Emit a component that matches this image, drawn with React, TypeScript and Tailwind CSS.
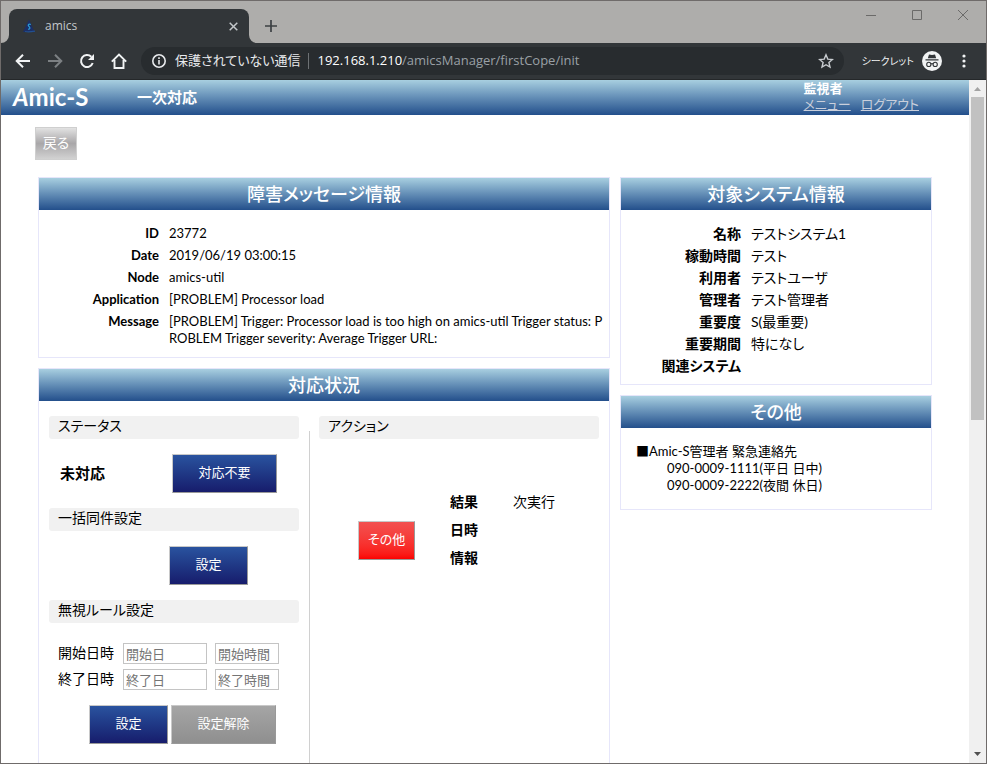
import type { ReactNode } from "react";

const headerGradient = "bg-linear-to-b from-[#a8cfe0] to-[#234f8b]";

function TabStrip() {
  return (
    <div className="flex h-[42px] shrink-0 items-end bg-[#aeadab] font-['Open_Sans','Noto_Sans_CJK_JP',sans-serif]">
      <svg className="h-2 w-2 text-[#323639]" viewBox="0 0 8 8" fill="currentColor">
        <path d="M8 0v8H0a8 8 0 0 0 8-8z" />
      </svg>
      <div className="flex h-[34px] w-60 items-center rounded-t-lg bg-[#323639] pr-2 pl-3 text-[#c3c7ca]">
        <svg className="h-4 w-4" viewBox="0 0 16 16">
          <path d="M8 1.500 13.500 14H2z" fill="#1c2f66" />
          <path d="M9.800 6.500c-2.500-1-3.200 1-1.800 2s1.200 3-1 2.700" stroke="#2a9fd8" strokeWidth="1.200" fill="none" />
          <path d="M4 13.500c3 .6 6 .3 10-.3" stroke="#23508f" strokeWidth="1.200" fill="none" />
        </svg>
        <span className="ml-2 flex-1 text-[12px] leading-4">amics</span>
        <button aria-label="タブを閉じる" className="flex h-4 w-4 items-center justify-center">
          <svg className="h-[9px] w-[9px]" viewBox="0 0 9 9" stroke="#c3c7ca" strokeWidth="1.500">
            <path d="M.7.7l7.600 7.600M8.300.7.7 8.300" />
          </svg>
        </button>
      </div>
      <svg className="h-2 w-2 text-[#323639]" viewBox="0 0 8 8" fill="currentColor">
        <path d="M0 0v8h8a8 8 0 0 1-8-8z" />
      </svg>
      <button aria-label="新しいタブ" className="ml-2 flex h-[34px] w-3 items-center">
        <svg className="h-3 w-3" viewBox="0 0 12 12" stroke="#3c4043" strokeWidth="1.700">
          <path d="M6 0v12M0 6h12" />
        </svg>
      </button>
      <div className="ml-auto flex gap-9 self-start pt-[9px] pr-[18px]">
        <button aria-label="最小化">
          <svg className="h-2.5 w-2.5" viewBox="0 0 10 10" stroke="#6b6a69">
            <path d="M0 5.500h10" />
          </svg>
        </button>
        <button aria-label="最大化">
          <svg className="h-2.5 w-2.5" viewBox="0 0 10 10" stroke="#6b6a69" fill="none">
            <path d="M.5.5h9v9h-9z" />
          </svg>
        </button>
        <button aria-label="閉じる">
          <svg className="h-2.5 w-2.5" viewBox="0 0 10 10" stroke="#6b6a69">
            <path d="M0 0l10 10M10 0 0 10" />
          </svg>
        </button>
      </div>
    </div>
  );
}

function Toolbar() {
  return (
    <div className="flex h-[37px] shrink-0 items-center border-b border-[#25282a] bg-[#323639] pr-5 pl-[14px] font-['Open_Sans','Noto_Sans_CJK_JP',sans-serif] text-[13px] [font-feature-settings:'palt']">
      <div className="flex gap-4">
        <button aria-label="戻る">
          <svg className="h-4 w-4" viewBox="0 0 16 16" stroke="#f1f3f4" strokeWidth="2" fill="none">
            <path d="M15 8H2M8 1.700 1.700 8 8 14.300" />
          </svg>
        </button>
        <button aria-label="進む">
          <svg className="h-4 w-4" viewBox="0 0 16 16" stroke="#7c8083" strokeWidth="2" fill="none">
            <path d="M1 8h13M8 1.700 14.300 8 8 14.300" />
          </svg>
        </button>
        <button aria-label="再読み込み">
          <svg className="h-4 w-4" viewBox="0 0 16 16" fill="none">
            <path d="M13.700 10a6 6 0 1 1-1.400-6.200" stroke="#f1f3f4" strokeWidth="2" />
            <path d="M15 1v6H9z" fill="#f1f3f4" />
          </svg>
        </button>
        <button aria-label="ホーム">
          <svg className="h-4 w-4" viewBox="0 0 16 16" stroke="#f1f3f4" strokeWidth="1.900" fill="none">
            <path d="M.8 8.600 8 1.500l7.200 7.100M3.500 7v8h9V7" />
          </svg>
        </button>
      </div>
      <div className="ml-3.5 flex h-7 min-w-0 flex-1 items-center rounded-full bg-[#282c2f] pr-2.5 pl-2.5 whitespace-nowrap text-[#9aa0a6]">
        <svg className="h-4 w-4 shrink-0" viewBox="0 0 16 16" stroke="#e8eaed" strokeWidth="1.600" fill="none">
          <circle cx="8" cy="8" r="6.200" />
          <path d="M8 7v4.500M8 4.300v1.700" />
        </svg>
        <span className="ml-2 text-[#e8eaed]">保護されていない通信</span>
        <span className="mx-2 h-4 w-px bg-[#6d7174]" />
        <span className="flex-1">
          <span className="text-white">192.168.1.210</span>/amicsManager/firstCope/init
        </span>
        <button aria-label="ブックマーク">
          <svg className="h-4 w-4" viewBox="0 0 16 16" stroke="#c8ccd0" strokeWidth="1.400" fill="none">
            <path d="m8 1.800 1.800 4.300 4.600.4-3.500 3 1.100 4.600L8 11.700l-4 2.400 1.100-4.600-3.500-3 4.600-.4z" />
          </svg>
        </button>
      </div>
      <span className="ml-[18px] text-[10px] text-[#f1f3f4]">シークレット</span>
      <svg className="ml-2 h-5 w-5" viewBox="0 0 20 20">
        <circle cx="10" cy="10" r="10" fill="#f1f3f4" />
        <path d="M7 3.500 10 4l3-.5 1.200 3.700H5.800zM3.500 8.200h13v1.200h-13z" fill="#323639" />
        <g fill="none" stroke="#323639" strokeWidth="1.100">
          <circle cx="6.800" cy="13.400" r="2.100" />
          <circle cx="13.200" cy="13.400" r="2.100" />
          <path d="M8.900 13c.7-.5 1.500-.5 2.200 0" />
        </g>
      </svg>
      <button aria-label="メニュー" className="ml-5">
        <svg className="h-4 w-1" viewBox="0 0 4 16" fill="#f1f3f4">
          <circle cx="2" cy="3" r="1.600" />
          <circle cx="2" cy="8" r="1.600" />
          <circle cx="2" cy="13" r="1.600" />
        </svg>
      </button>
    </div>
  );
}

function AppHeader() {
  return (
    <header className={`flex h-[35px] items-start pr-[50px] pl-3 text-white ${headerGradient}`}>
      <div className="w-[124px] text-[24px] leading-[34px] font-bold">
        <span className="italic">A</span>mic-S
      </div>
      <h1 className="flex-1 text-[15px] leading-[35px] font-bold">一次対応</h1>
      <div className="text-[13px] leading-4">
        <div className="font-bold">監視者</div>
        <nav className="flex gap-2.5 text-[#c9cfdc]">
          <a href="#menu" className="underline">メニュー</a>
          <a href="#logout" className="underline">ログアウト</a>
        </nav>
      </div>
    </header>
  );
}

function Panel({ title, className = "", children }: { title: string; className?: string; children: ReactNode }) {
  return (
    <section className={`border border-[#e6e6fa] ${className}`}>
      <h2 className={`h-8 text-center text-[18px] leading-8 font-medium text-white ${headerGradient}`}>{title}</h2>
      {children}
    </section>
  );
}

function InfoTable({ rows }: { rows: [string, string][] }) {
  return (
    <table className="mt-[15px] mb-[5px] w-full table-fixed leading-[17px]">
      <tbody>
        {rows.map(([label, value]) => (
          <tr key={label} className="align-top">
            <th scope="row" className="w-[120px] pb-[5px] text-right font-bold">{label}</th>
            <td className="pr-1 pb-[5px] pl-2.5 break-all">{value}</td>
          </tr>
        ))}
      </tbody>
    </table>
  );
}

function SectionTitle({ children }: { children: ReactNode }) {
  return <h3 className="h-[23px] rounded-[3px] bg-[#f1f1f1] pl-[9px] leading-5">{children}</h3>;
}

const buttonBase =
  "h-[39px] border border-t-[#c8c8c8] border-l-[#c8c8c8] border-r-[#999] border-b-[#999] pb-0.5 text-[13px] text-white";
const blueButton = `${buttonBase} bg-linear-to-b from-[#2a539f] to-[#171c6c]`;

function DateRow({ id, label, date, time }: { id: string; label: string; date: string; time: string }) {
  const field = "h-[21px] border border-[#c4c4c4] bg-white px-[2px] text-[13px] placeholder:text-[#757575]";
  return (
    <div className="flex items-start">
      <label htmlFor={id} className="w-[65px] leading-[19px]">{label}</label>
      <input id={id} placeholder={date} className={`w-[84px] ${field}`} />
      <input aria-label={time} placeholder={time} className={`ml-2 w-16 ${field}`} />
    </div>
  );
}

function StatusPanel() {
  return (
    <Panel title="対応状況" className="flex min-h-[480px] flex-1 flex-col">
      <div className="grid flex-1 grid-cols-[25fr_2fr_28fr] px-2.5 pt-[15px]">
        <div>
          <SectionTitle>ステータス</SectionTitle>
          <div className="my-[15px] flex items-center justify-between pr-[22px] pl-[11px]">
            <span className="text-[15px] font-bold">未対応</span>
            <button className={`w-[105px] ${blueButton}`}>対応不要</button>
          </div>
          <SectionTitle>一括同件設定</SectionTitle>
          <div className="my-[15px] flex justify-end pr-[51px]">
            <button className={`w-[79px] ${blueButton}`}>設定</button>
          </div>
          <SectionTitle>無視ルール設定</SectionTitle>
          <div className="mt-5 flex flex-col gap-[5px] pl-[9px]">
            <DateRow id="start" label="開始日時" date="開始日" time="開始時間" />
            <DateRow id="end" label="終了日時" date="終了日" time="終了時間" />
          </div>
          <div className="my-[15px] flex gap-[3px] pl-10">
            <button className={`w-[79px] ${blueButton}`}>設定</button>
            <button className={`w-[105px] bg-linear-to-b from-[#a5a5a5] to-[#8f8f8f] ${buttonBase}`}>設定解除</button>
          </div>
        </div>
        <div className="mt-[15px] ml-2.5 border-l border-[#d0d0d0]" />
        <div>
          <SectionTitle>アクション</SectionTitle>
          <div className="mt-12 flex items-center pl-[39px]">
            <button className={`w-[57px] bg-linear-to-b from-[#f25050] to-[#fb0000] ${buttonBase}`}>その他</button>
            <table className="mb-[22px] ml-[35px] text-left">
              <tbody>
                <tr className="h-7">
                  <th scope="row" className="w-[63px] font-bold">結果</th>
                  <td>次実行</td>
                </tr>
                <tr className="h-7">
                  <th scope="row" className="font-bold">日時</th>
                  <td />
                </tr>
                <tr className="h-7">
                  <th scope="row" className="font-bold">情報</th>
                  <td />
                </tr>
              </tbody>
            </table>
          </div>
        </div>
      </div>
    </Panel>
  );
}

function Scrollbar() {
  return (
    <div className="flex w-[17px] shrink-0 flex-col items-center bg-[#f0f0f0]">
      <svg className="h-[17px] w-[17px]" viewBox="0 0 17 17" fill="#a3a3a3">
        <path d="M5 11l3.500-4L12 11z" />
      </svg>
      <div className="h-[323px] w-[13px] bg-[#c1c1c1]" />
      <svg className="mt-auto h-[17px] w-[17px]" viewBox="0 0 17 17" fill="#505050">
        <path d="M5 6l3.500 4L12 6z" />
      </svg>
    </div>
  );
}

export default function App() {
  return (
    <div className="flex h-screen flex-col overflow-hidden border border-[#6f6b6a] bg-white">
      <TabStrip />
      <Toolbar />
      <div className="flex min-h-0 flex-1">
        <div className="min-w-0 flex-1 overflow-hidden font-[Lato,'Noto_Sans_CJK_JP',sans-serif] text-[14px] leading-[17px] text-black [font-feature-settings:'palt']">
          <AppHeader />
          <main className="px-[37px] pt-3">
            <button className="-ml-[3px] block h-[33px] w-[42px] border border-[#cfcfcf] bg-linear-to-b from-[#e2e2e2] via-[#a9a7a9] to-[#d2d2d2] pb-0.5 text-[14px] text-white">
              戻る
            </button>
            <div className="mt-[17px] grid grid-cols-[572fr_312fr] gap-2.5">
              <div className="flex flex-col gap-2.5">
                <Panel title="障害メッセージ情報">
                  <div className="text-[13px]">
                    <InfoTable
                      rows={[
                        ["ID", "23772"],
                        ["Date", "2019/06/19 03:00:15"],
                        ["Node", "amics-util"],
                        ["Application", "[PROBLEM] Processor load"],
                        [
                          "Message",
                          "[PROBLEM] Trigger: Processor load is too high on amics-util Trigger status: PROBLEM Trigger severity: Average Trigger URL:",
                        ],
                      ]}
                    />
                  </div>
                </Panel>
                <StatusPanel />
              </div>
              <div className="flex flex-col gap-2.5">
                <Panel title="対象システム情報">
                  <InfoTable
                    rows={[
                      ["名称", "テストシステム1"],
                      ["稼動時間", "テスト"],
                      ["利用者", "テストユーザ"],
                      ["管理者", "テスト管理者"],
                      ["重要度", "S(最重要)"],
                      ["重要期間", "特になし"],
                      ["関連システム", ""],
                    ]}
                  />
                </Panel>
                <Panel title="その他">
                  <div className="p-[15px] text-[13px]">
                    <p>■Amic-S管理者 緊急連絡先</p>
                    <p className="pl-[31px]">090-0009-1111(平日 日中)</p>
                    <p className="pl-[31px]">090-0009-2222(夜間 休日)</p>
                  </div>
                </Panel>
              </div>
            </div>
          </main>
        </div>
        <Scrollbar />
      </div>
    </div>
  );
}
